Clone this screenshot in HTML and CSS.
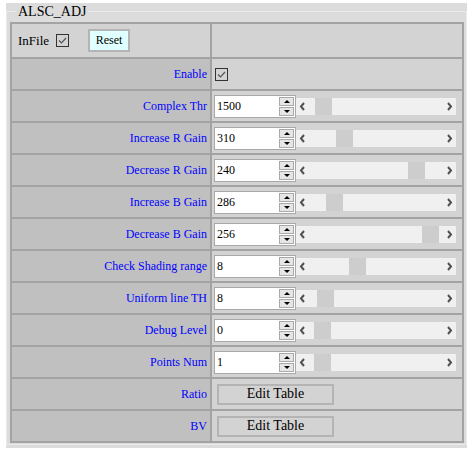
FILE: index.html
```html
<!DOCTYPE html>
<html lang="en">
<head>
    <meta charset="UTF-8">
    <title>ALSC_ADJ</title>
    <link rel="stylesheet" href="styles.css">
</head>
<body>
    <div class="panel">
        <fieldset class="group">
            <legend>ALSC_ADJ</legend>
            <table class="params">
                <tr class="head-row">
                    <td class="head-cell">
                        <span class="infile">InFile</span>
                        <span class="check"><svg width="13" height="13" viewBox="0 0 13 13"><rect x="0.5" y="0.5" width="12" height="12" fill="none" stroke="#333"/><polyline points="3,6.5 5.5,9 10,4" fill="none" stroke="#555" stroke-width="1.2"/></svg></span>
                        <button class="reset">Reset</button>
                    </td>
                    <td></td>
                </tr>
                <tr>
                    <td class="label">Enable</td>
                    <td class="value">
                        <div class="field"><span class="check"><svg width="13" height="13" viewBox="0 0 13 13"><rect x="0.5" y="0.5" width="12" height="12" fill="none" stroke="#333"/><polyline points="3,6.5 5.5,9 10,4" fill="none" stroke="#555" stroke-width="1.2"/></svg></span></div>
                    </td>
                </tr>
                <tr>
                    <td class="label">Complex Thr</td>
                    <td class="value">
                        <div class="field">
                            <div class="num"><span class="num-text">1500</span><span class="spin"><i class="up"></i><i class="down"></i></span></div>
                            <div class="scroll"><svg class="arr" width="17" height="17" viewBox="0 0 17 17"><polyline points="8,5 5,8.5 8,12" fill="none" stroke="#505050" stroke-width="2"/></svg><span class="thumb" style="left: 19px"></span><svg class="arr" width="17" height="17" viewBox="0 0 17 17"><polyline points="9,5 12,8.5 9,12" fill="none" stroke="#505050" stroke-width="2"/></svg></div>
                        </div>
                    </td>
                </tr>
                <tr>
                    <td class="label">Increase R Gain</td>
                    <td class="value">
                        <div class="field">
                            <div class="num"><span class="num-text">310</span><span class="spin"><i class="up"></i><i class="down"></i></span></div>
                            <div class="scroll"><svg class="arr" width="17" height="17" viewBox="0 0 17 17"><polyline points="8,5 5,8.5 8,12" fill="none" stroke="#505050" stroke-width="2"/></svg><span class="thumb" style="left: 40px"></span><svg class="arr" width="17" height="17" viewBox="0 0 17 17"><polyline points="9,5 12,8.5 9,12" fill="none" stroke="#505050" stroke-width="2"/></svg></div>
                        </div>
                    </td>
                </tr>
                <tr>
                    <td class="label">Decrease R Gain</td>
                    <td class="value">
                        <div class="field">
                            <div class="num"><span class="num-text">240</span><span class="spin"><i class="up"></i><i class="down"></i></span></div>
                            <div class="scroll"><svg class="arr" width="17" height="17" viewBox="0 0 17 17"><polyline points="8,5 5,8.5 8,12" fill="none" stroke="#505050" stroke-width="2"/></svg><span class="thumb" style="left: 112px"></span><svg class="arr" width="17" height="17" viewBox="0 0 17 17"><polyline points="9,5 12,8.5 9,12" fill="none" stroke="#505050" stroke-width="2"/></svg></div>
                        </div>
                    </td>
                </tr>
                <tr>
                    <td class="label">Increase B Gain</td>
                    <td class="value">
                        <div class="field">
                            <div class="num"><span class="num-text">286</span><span class="spin"><i class="up"></i><i class="down"></i></span></div>
                            <div class="scroll"><svg class="arr" width="17" height="17" viewBox="0 0 17 17"><polyline points="8,5 5,8.5 8,12" fill="none" stroke="#505050" stroke-width="2"/></svg><span class="thumb" style="left: 30px"></span><svg class="arr" width="17" height="17" viewBox="0 0 17 17"><polyline points="9,5 12,8.5 9,12" fill="none" stroke="#505050" stroke-width="2"/></svg></div>
                        </div>
                    </td>
                </tr>
                <tr>
                    <td class="label">Decrease B Gain</td>
                    <td class="value">
                        <div class="field">
                            <div class="num"><span class="num-text">256</span><span class="spin"><i class="up"></i><i class="down"></i></span></div>
                            <div class="scroll"><svg class="arr" width="17" height="17" viewBox="0 0 17 17"><polyline points="8,5 5,8.5 8,12" fill="none" stroke="#505050" stroke-width="2"/></svg><span class="thumb" style="left: 126px"></span><svg class="arr" width="17" height="17" viewBox="0 0 17 17"><polyline points="9,5 12,8.5 9,12" fill="none" stroke="#505050" stroke-width="2"/></svg></div>
                        </div>
                    </td>
                </tr>
                <tr>
                    <td class="label">Check Shading range</td>
                    <td class="value">
                        <div class="field">
                            <div class="num"><span class="num-text">8</span><span class="spin"><i class="up"></i><i class="down"></i></span></div>
                            <div class="scroll"><svg class="arr" width="17" height="17" viewBox="0 0 17 17"><polyline points="8,5 5,8.5 8,12" fill="none" stroke="#505050" stroke-width="2"/></svg><span class="thumb" style="left: 53px"></span><svg class="arr" width="17" height="17" viewBox="0 0 17 17"><polyline points="9,5 12,8.5 9,12" fill="none" stroke="#505050" stroke-width="2"/></svg></div>
                        </div>
                    </td>
                </tr>
                <tr>
                    <td class="label">Uniform line TH</td>
                    <td class="value">
                        <div class="field">
                            <div class="num"><span class="num-text">8</span><span class="spin"><i class="up"></i><i class="down"></i></span></div>
                            <div class="scroll"><svg class="arr" width="17" height="17" viewBox="0 0 17 17"><polyline points="8,5 5,8.5 8,12" fill="none" stroke="#505050" stroke-width="2"/></svg><span class="thumb" style="left: 21px"></span><svg class="arr" width="17" height="17" viewBox="0 0 17 17"><polyline points="9,5 12,8.5 9,12" fill="none" stroke="#505050" stroke-width="2"/></svg></div>
                        </div>
                    </td>
                </tr>
                <tr>
                    <td class="label">Debug Level</td>
                    <td class="value">
                        <div class="field">
                            <div class="num"><span class="num-text">0</span><span class="spin"><i class="up"></i><i class="down"></i></span></div>
                            <div class="scroll"><svg class="arr" width="17" height="17" viewBox="0 0 17 17"><polyline points="8,5 5,8.5 8,12" fill="none" stroke="#505050" stroke-width="2"/></svg><span class="thumb" style="left: 18px"></span><svg class="arr" width="17" height="17" viewBox="0 0 17 17"><polyline points="9,5 12,8.5 9,12" fill="none" stroke="#505050" stroke-width="2"/></svg></div>
                        </div>
                    </td>
                </tr>
                <tr>
                    <td class="label">Points Num</td>
                    <td class="value">
                        <div class="field">
                            <div class="num"><span class="num-text">1</span><span class="spin"><i class="up"></i><i class="down"></i></span></div>
                            <div class="scroll"><svg class="arr" width="17" height="17" viewBox="0 0 17 17"><polyline points="8,5 5,8.5 8,12" fill="none" stroke="#505050" stroke-width="2"/></svg><span class="thumb" style="left: 18px"></span><svg class="arr" width="17" height="17" viewBox="0 0 17 17"><polyline points="9,5 12,8.5 9,12" fill="none" stroke="#505050" stroke-width="2"/></svg></div>
                        </div>
                    </td>
                </tr>
                <tr>
                    <td class="label">Ratio</td>
                    <td class="value"><div class="field"><button class="edit">Edit Table</button></div></td>
                </tr>
                <tr>
                    <td class="label">BV</td>
                    <td class="value"><div class="field"><button class="edit">Edit Table</button></div></td>
                </tr>
            </table>
        </fieldset>
    </div>
</body>
</html>
```

FILE: styles.css
```css
body {
    margin: 0;
    background-color: #ffffff;
    font-family: "Liberation Serif", "Times New Roman", serif;
}

.panel {
    margin: 3px 0 0 6px;
    width: 461px;
    padding-bottom: 3px;
    background-color: #dcdcdc;
}

.group {
    margin: 0;
    padding: 2px 1px 1px 3px;
    border: 1px solid #ebebeb;
}

.group legend {
    margin-left: 6px;
    padding: 0 2px;
    font-size: 14px;
    line-height: 17px;
    color: #000;
}

.params {
    width: 454px;
    border-collapse: collapse;
    border: 2px solid #a3a3a3;
}

.params td {
    border: 2px solid #a3a3a3;
    padding: 0;
    height: 30px;
    background-color: #d3d3d3;
}

.params .head-row td {
    height: 33px;
}

.params td.label {
    width: 195px;
    padding-right: 3px;
    text-align: right;
    font-size: 12px;
    color: #0000ff;
    background-color: #c0c0c0;
}

.head-cell {
    white-space: nowrap;
}

.infile {
    margin-left: 6px;
    font-size: 13px;
    vertical-align: middle;
}

.check {
    display: inline-block;
    width: 13px;
    height: 13px;
    vertical-align: middle;
}

.check svg {
    display: block;
}

.head-cell .check {
    margin-left: 3px;
}

.reset {
    margin-left: 15px;
    width: 42px;
    height: 23px;
    padding: 0;
    border: 2px solid #b4b4b4;
    background-color: #e0ffff;
    font-family: "Liberation Serif", serif;
    font-size: 12px;
    vertical-align: middle;
}

.field {
    display: flex;
    align-items: center;
    padding-left: 2px;
}

.field > .check {
    margin-left: 1px;
}

.num {
    display: flex;
    width: 80px;
    height: 21px;
    border: 1px solid #a9a9a9;
    background-color: #fff;
    align-items: center;
    justify-content: space-between;
}

.num-text {
    padding-left: 2px;
    font-size: 12px;
    color: #000;
}

.spin {
    display: flex;
    flex-direction: column;
    gap: 1px;
    margin-right: 1px;
}

.spin i {
    display: block;
    width: 13px;
    height: 7px;
    border: 1px solid #a9a9a9;
    background-color: #e6e6e6;
    position: relative;
}

.spin i::after {
    content: "";
    position: absolute;
    left: 4px;
    width: 0;
    height: 0;
    border-left: 3px solid transparent;
    border-right: 3px solid transparent;
}

.spin .up::after {
    top: 2px;
    border-bottom: 3px solid #000;
}

.spin .down::after {
    top: 2px;
    border-top: 3px solid #000;
}

.scroll {
    display: flex;
    position: relative;
    width: 160px;
    height: 17px;
    background-color: #f0f0f0;
    justify-content: space-between;
    align-items: center;
}

.arr {
    display: block;
}

.thumb {
    position: absolute;
    top: 0;
    width: 17px;
    height: 17px;
    background-color: #cdcdcd;
}

.edit {
    margin-left: 3px;
    width: 117px;
    height: 21px;
    padding: 0;
    border: 2px solid #b4b4b4;
    background-color: #d3d3d3;
    font-family: "Liberation Serif", serif;
    font-size: 14px;
    color: #000;
}
```
